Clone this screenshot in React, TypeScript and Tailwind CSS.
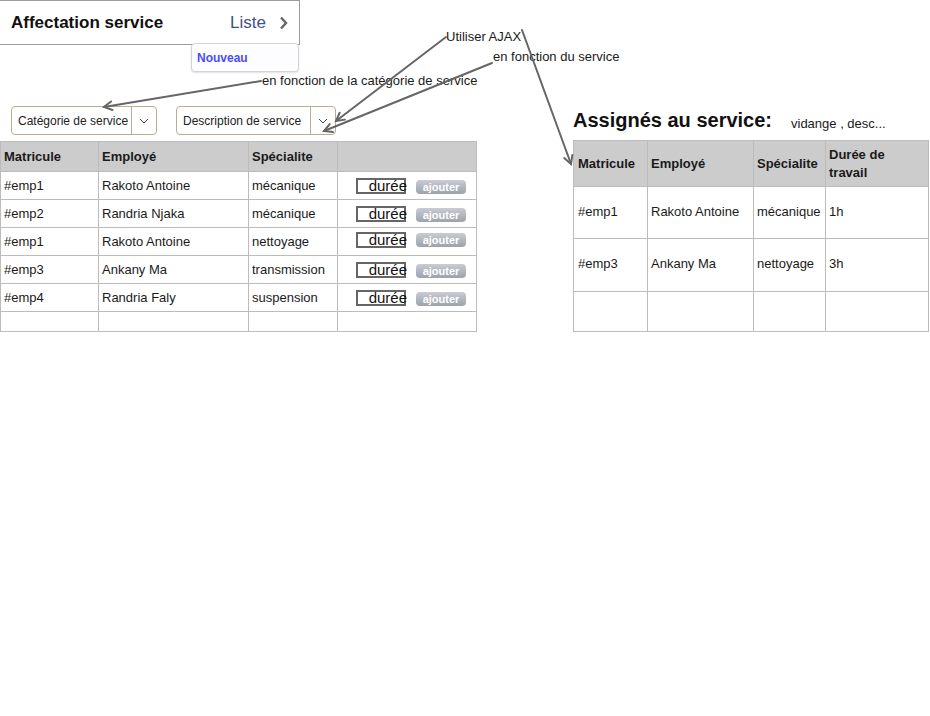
import { ReactNode } from "react";

type Arrow = { x1: number; y1: number; x2: number; y2: number };

const arrows: Arrow[] = [
  { x1: 261, y1: 81, x2: 104, y2: 107 },
  { x1: 446, y1: 37, x2: 336, y2: 121 },
  { x1: 492, y1: 63, x2: 324, y2: 131 },
  { x1: 522, y1: 30, x2: 571, y2: 164 },
];

const available = [
  { id: "#emp1", name: "Rakoto Antoine", spec: "mécanique" },
  { id: "#emp2", name: "Randria Njaka", spec: "mécanique" },
  { id: "#emp1", name: "Rakoto Antoine", spec: "nettoyage" },
  { id: "#emp3", name: "Ankany Ma", spec: "transmission" },
  { id: "#emp4", name: "Randria Faly", spec: "suspension" },
];

const assigned = [
  { id: "#emp1", name: "Rakoto Antoine", spec: "mécanique", time: "1h", h: "h-[52px]" },
  { id: "#emp3", name: "Ankany Ma", spec: "nettoyage", time: "3h", h: "h-[53px]" },
];

function ArrowLine({ a }: { a: Arrow }) {
  // open arrow head drawn at (x2, y2)
  const ang = Math.atan2(a.y2 - a.y1, a.x2 - a.x1);
  const len = 9;
  const p1 = [a.x2 - len * Math.cos(ang - 0.5), a.y2 - len * Math.sin(ang - 0.5)];
  const p2 = [a.x2 - len * Math.cos(ang + 0.5), a.y2 - len * Math.sin(ang + 0.5)];
  return (
    <g stroke="#666" strokeWidth="2" fill="none" strokeLinecap="round">
      <line x1={a.x1} y1={a.y1} x2={a.x2} y2={a.y2} />
      <polyline points={`${p1[0]},${p1[1]} ${a.x2},${a.y2} ${p2[0]},${p2[1]}`} />
    </g>
  );
}

function Select({ label, width }: { label: string; width: string }) {
  return (
    <div className={`flex h-[29px] ${width} rounded-[4px] border border-[#b9ad96] bg-white`}>
      <div className="flex flex-1 items-center pl-[6px] text-[12px] text-[#222]">{label}</div>
      <div className="flex w-[25px] items-center justify-center border-l border-[#b9ad96]">
        <svg width="10" height="6" viewBox="0 0 10 6">
          <polyline points="1,1 5,5 9,1" fill="none" stroke="#444" strokeWidth="1" />
        </svg>
      </div>
    </div>
  );
}

function Cell({ children, className = "" }: { children?: ReactNode; className?: string }) {
  return (
    <div className={`flex items-center border-b border-r border-[#bcbcbc] ${className}`}>{children}</div>
  );
}

function App() {
  return (
    <div className="relative h-[716px] w-[930px] overflow-hidden bg-white font-['Liberation_Sans',Arial,sans-serif] text-[#1a1a1a]">
      <div className="flex h-[45px] w-[300px] items-center border-y border-r border-[#9c9c9c]">
        <span className="pl-[11px] text-[17px] font-bold text-[#111]">Affectation service</span>
        <span className="ml-auto text-[17px] text-[#3f5088]">Liste</span>
        <svg className="ml-[13px] mr-[11px]" width="9" height="14" viewBox="0 0 9 14">
          <polyline points="2,1.5 7,7 2,12.5" fill="none" stroke="#666" strokeWidth="2.4" />
        </svg>
      </div>
      <div className="-mt-[2px] ml-[191px] flex h-[29px] w-[108px] items-center rounded-[4px] border border-[#d4d4d4] bg-[#fdfdff] pl-[5px] text-[12px] font-bold text-[#4b4bff] shadow-[0_1px_2px_rgba(0,0,0,0.12)]">
        Nouveau
      </div>

      <div className="mt-[34px] flex items-start">
        <div className="w-[477px]">
          <div className="flex">
            <div className="ml-[11px]">
              <Select label="Catégorie de service" width="w-[146px]" />
            </div>
            <div className="ml-[19px]">
              <Select label="Description de service" width="w-[160px]" />
            </div>
          </div>

          <div className="mt-[6px] grid w-[477px] grid-cols-[98px_150px_89px_139px] border-l border-t border-[#bcbcbc] text-[13px]">
            <Cell className="h-[30px] bg-[#cccccc] pl-[3px] font-bold">Matricule</Cell>
            <Cell className="h-[30px] bg-[#cccccc] pl-[3px] font-bold">Employé</Cell>
            <Cell className="h-[30px] bg-[#cccccc] pl-[3px] font-bold">Spécialite</Cell>
            <Cell className="h-[30px] bg-[#cccccc]" />
            {available.map((r, i) => (
              <div key={i} className="contents">
                <Cell className="h-[28px] pl-[3px]">{r.id}</Cell>
                <Cell className="h-[28px] pl-[3px]">{r.name}</Cell>
                <Cell className="h-[28px] pl-[3px]">{r.spec}</Cell>
                <Cell className="h-[28px] pl-[18px]">
                  <div className={`flex h-[16px] w-[50px] items-center justify-end border-2 border-[#666] ${i === 2 ? "-mt-[4px]" : ""}`}>
                    <span className="-mr-[3px] whitespace-nowrap text-[15px] leading-[16px] text-[#111]">durée</span>
                  </div>
                  <div className={`ml-[10px] flex h-[14px] w-[50px] items-center justify-center rounded-[4px] bg-gradient-to-b from-[#c9ccd3] to-[#9da2ac] text-[11px] font-bold leading-[14px] text-white ${i === 2 ? "-mt-[4px] h-[11px]" : "mt-[2px]"}`}>
                    ajouter
                  </div>
                </Cell>
              </div>
            ))}
            <Cell className="h-[20px]" />
            <Cell className="h-[20px]" />
            <Cell className="h-[20px]" />
            <Cell className="h-[20px]" />
          </div>
        </div>

        <div className="ml-[96px] w-[356px]">
          <div className="flex h-[34px] items-start">
            <span className="mt-[3px] text-[20px] font-bold leading-[23px] text-[#111]">Assignés au service:</span>
            <span className="ml-[19px] mt-[10px] text-[13px] leading-[16px]">vidange , desc...</span>
          </div>
          <div className="grid w-[356px] grid-cols-[74px_106px_72px_103px] border-l border-t border-[#bcbcbc] text-[13px]">
            <Cell className="h-[46px] bg-[#cccccc] pl-[4px] font-bold">Matricule</Cell>
            <Cell className="h-[46px] bg-[#cccccc] pl-[3px] font-bold">Employé</Cell>
            <Cell className="h-[46px] bg-[#cccccc] pl-[3px] font-bold">Spécialite</Cell>
            <Cell className="h-[46px] bg-[#cccccc] pl-[3px] font-bold leading-[18px]">
              <span>
                Durée de
                <br />
                travail
              </span>
            </Cell>
            {assigned.map((r, i) => (
              <div key={i} className="contents">
                <Cell className={`${r.h} pl-[4px] pb-[2px]`}>{r.id}</Cell>
                <Cell className={`${r.h} pl-[3px] pb-[2px]`}>{r.name}</Cell>
                <Cell className={`${r.h} pl-[3px] pb-[2px]`}>{r.spec}</Cell>
                <Cell className={`${r.h} pl-[3px] pb-[2px]`}>{r.time}</Cell>
              </div>
            ))}
            <Cell className="h-[40px]" />
            <Cell className="h-[40px]" />
            <Cell className="h-[40px]" />
            <Cell className="h-[40px]" />
          </div>
        </div>
      </div>

      {/* annotations */}
      <span className="absolute left-[446px] top-[29px] text-[13px] leading-[16px]">Utiliser AJAX</span>
      <span className="absolute left-[493px] top-[49px] text-[13px] leading-[16px]">en fonction du service</span>
      <span className="absolute left-[262px] top-[73px] text-[13px] leading-[16px]">
        en fonction de la catégorie de service
      </span>
      <svg className="pointer-events-none absolute left-0 top-0" width="930" height="716">
        {arrows.map((a, i) => (
          <ArrowLine key={i} a={a} />
        ))}
      </svg>
    </div>
  );
}

export default App;
